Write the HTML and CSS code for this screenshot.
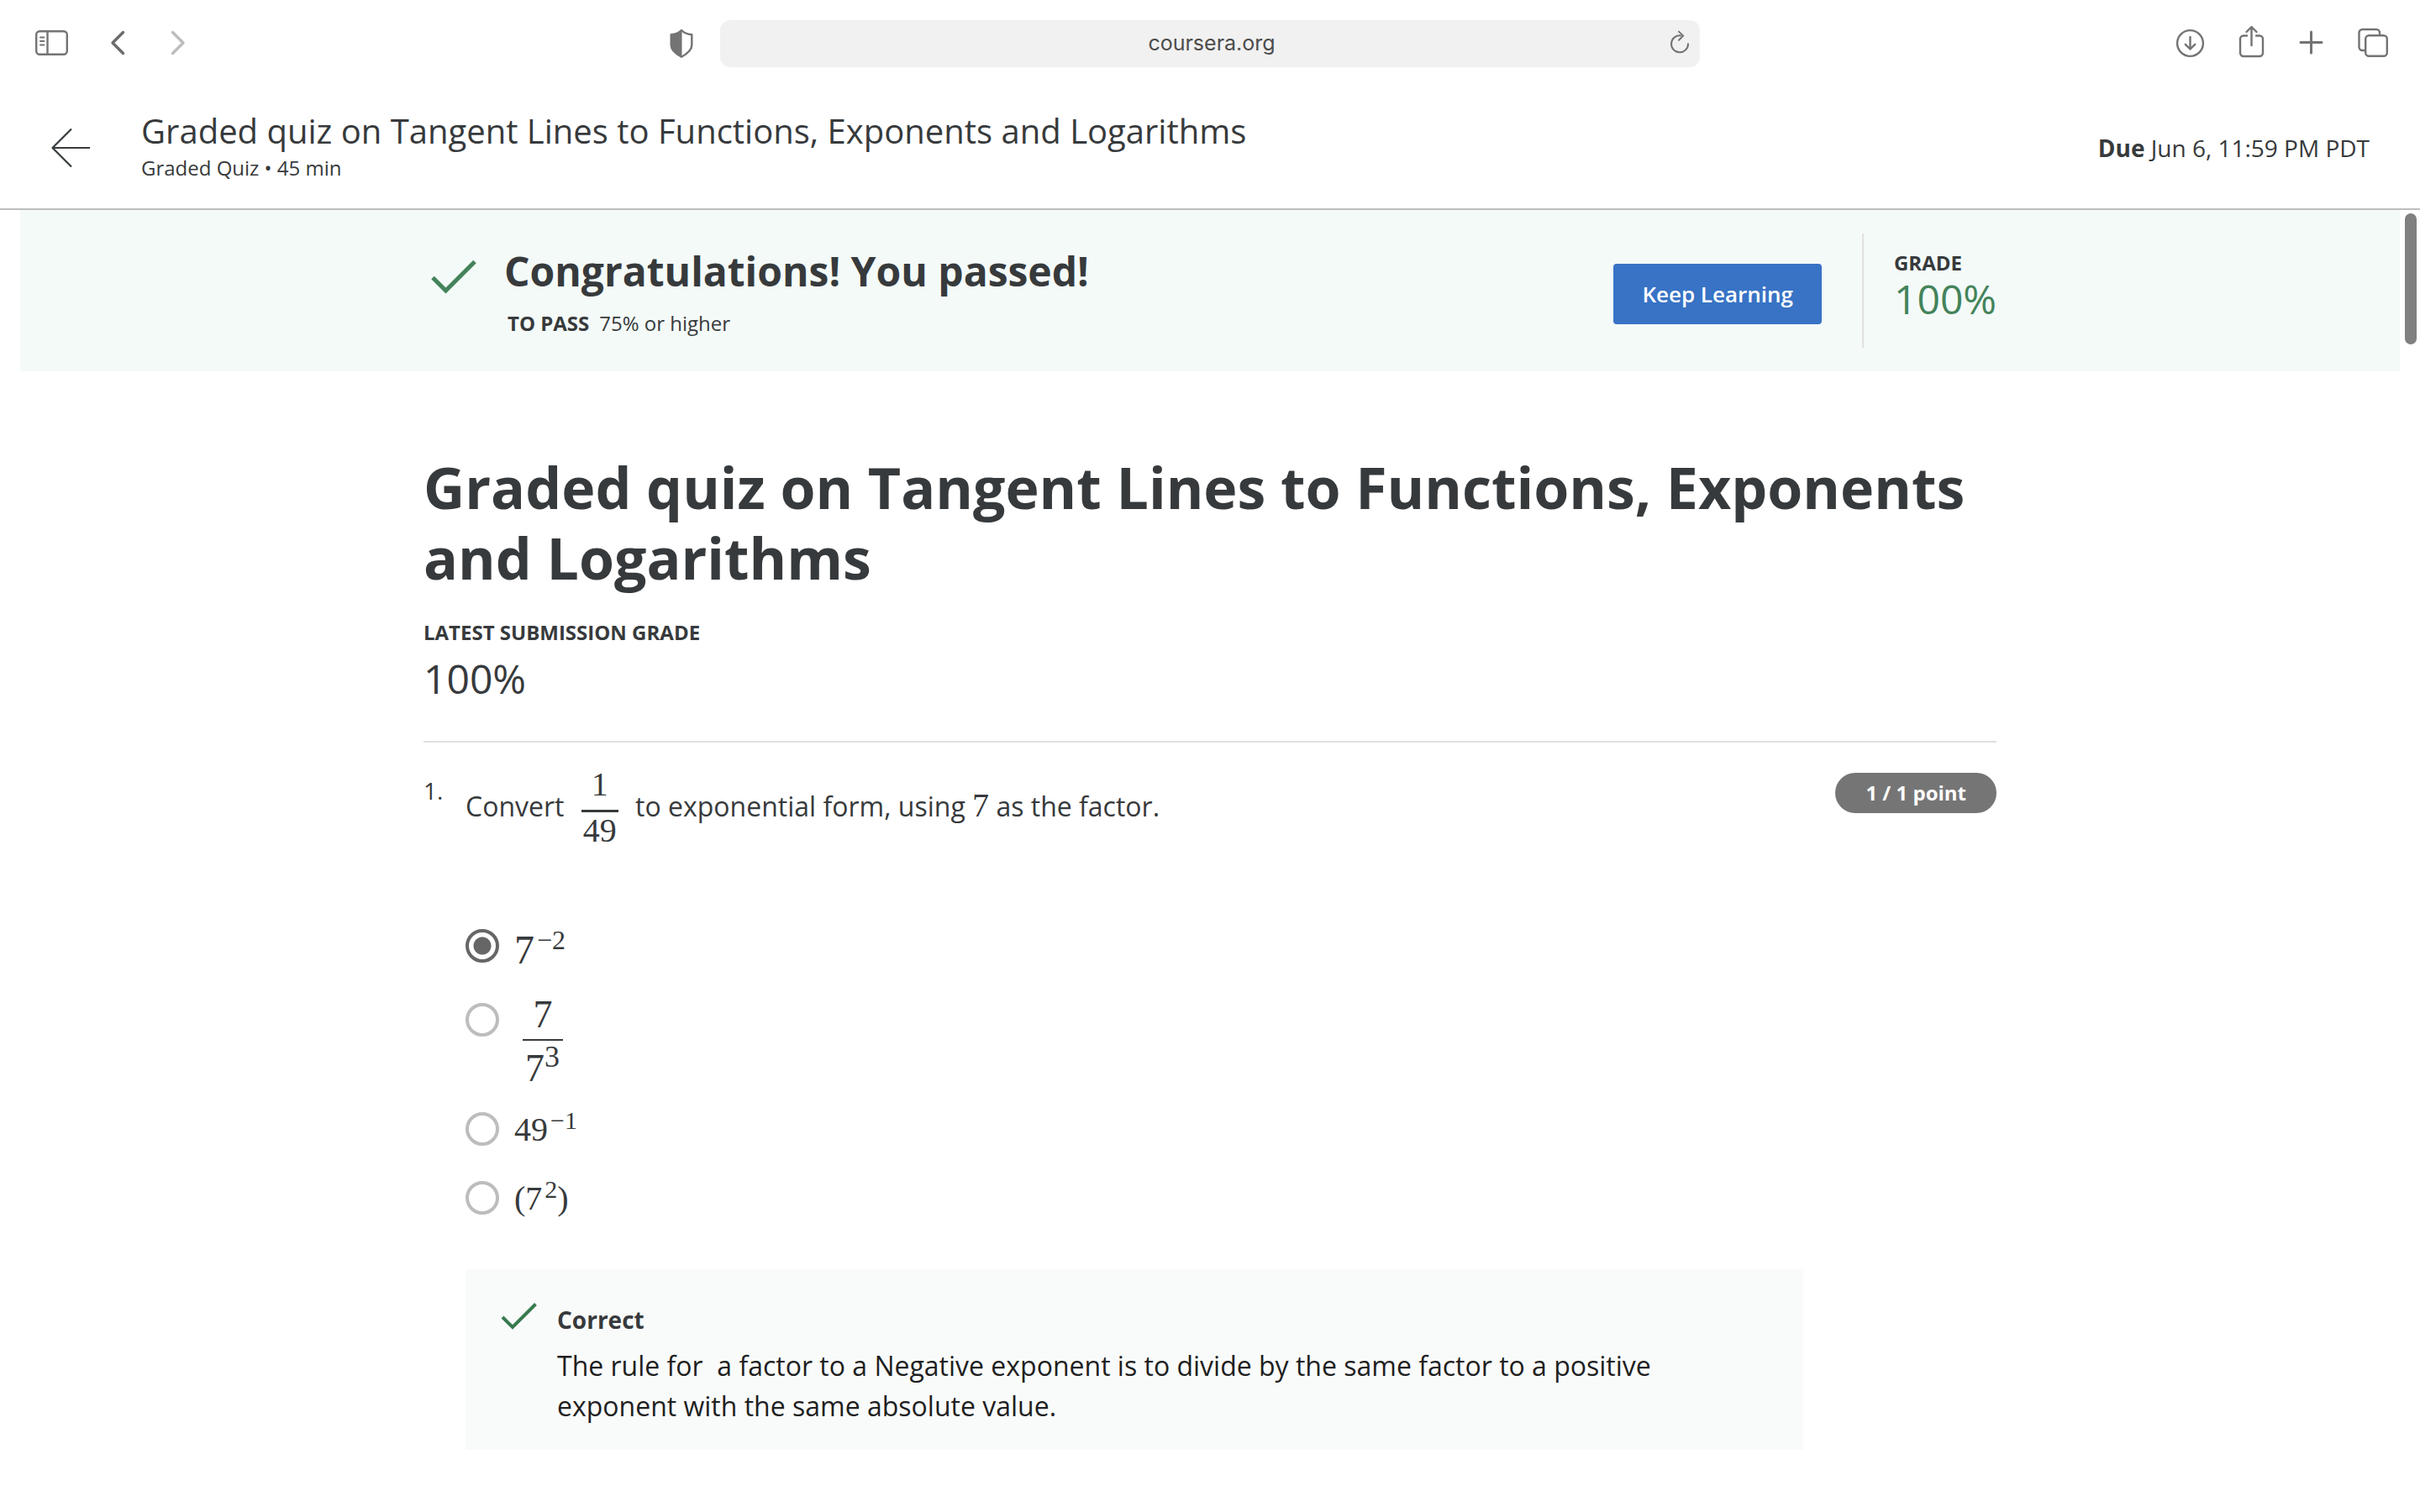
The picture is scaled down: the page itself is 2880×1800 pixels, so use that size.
FILE: index.html
```html
<!DOCTYPE html>
<html lang="en">
<head>
<meta charset="utf-8">
<title>Graded quiz on Tangent Lines to Functions, Exponents and Logarithms</title>
<link rel="stylesheet" href="styles.css">
</head>
<body>
<div class="toolbar">
  <div class="toolbar-left">
    <button class="icon-button" type="button" aria-label="Sidebar">
      <svg width="40" height="36" viewBox="0 0 40 36" fill="none" stroke="#737373" stroke-width="2.4"><rect x="5.2" y="3.2" width="36.6" height="27.6" rx="4"/><path d="M18.500 3v28"/><path d="M10 10.500h4.500M10 15h4.500M10 19.500h4.500" stroke-width="2" stroke-linecap="round"/></svg>
    </button>
    <button class="icon-button" type="button" aria-label="Back">
      <svg width="20" height="36" viewBox="0 0 20 36" fill="none" stroke="#6b6b6b" stroke-width="3.400" stroke-linecap="round" stroke-linejoin="round"><path d="M16.500 4.500 4 17l12.500 12.500"/></svg>
    </button>
    <button class="icon-button" type="button" aria-label="Forward" disabled>
      <svg width="20" height="36" viewBox="0 0 20 36" fill="none" stroke="#bdbdbd" stroke-width="3.400" stroke-linecap="round" stroke-linejoin="round"><path d="M3.500 4.500 16 17 3.500 29.500"/></svg>
    </button>
    <button class="icon-button shield" type="button" aria-label="Privacy report">
      <svg width="28" height="36" viewBox="0 0 28 36"><path d="M14 2C17 5.300 21 6.700 26.300 7.300V19.500c0 5.500-4.500 10-12.300 14.300C6.200 29.500 1.700 25 1.700 19.500V7.300C7 6.700 11 5.300 14 2Z" fill="none" stroke="#737373" stroke-width="2.400" stroke-linejoin="round"/><path d="M14.500 2C11 5.300 7 6.700 1.700 7.300V19.500c0 5.500 4.500 10 12.800 14.300Z" fill="#737373"/></svg>
    </button>
  </div>
  <div class="address">
    <input class="address-input" type="text" value="coursera.org" aria-label="Address">
    <button class="icon-button reload" type="button" aria-label="Reload">
      <svg width="24" height="30" viewBox="0 0 24 30" fill="none" stroke="#737373" stroke-width="2" stroke-linecap="round" stroke-linejoin="round"><path d="M13.500 5.400a10 10 0 1 0 8.500 9.800"/><path d="m11 .6 5.200 5-5.200 5.200"/></svg>
    </button>
  </div>
  <div class="toolbar-right">
    <button class="icon-button" type="button" aria-label="Downloads">
      <svg width="36" height="40" viewBox="0 0 36 40" fill="none" stroke="#737373" stroke-width="2.400" stroke-linecap="round" stroke-linejoin="round"><circle cx="18.500" cy="19.500" r="15.400"/><path d="M18.500 12v14.500M12.800 20.800l5.700 5.700 5.700-5.700"/></svg>
    </button>
    <button class="icon-button" type="button" aria-label="Share">
      <svg width="34" height="40" viewBox="0 0 34 40" fill="none" stroke="#737373" stroke-width="2.400" stroke-linecap="round" stroke-linejoin="round"><path d="M12 10.500H8a4 4 0 0 0-4 4V31a4 4 0 0 0 4 4h19a4 4 0 0 0 4-4V14.500a4 4 0 0 0-4-4h-4"/><path d="M17.500 22V1M11.500 6l6-6 6 6"/></svg>
    </button>
    <button class="icon-button" type="button" aria-label="New tab">
      <svg width="32" height="40" viewBox="0 0 32 40" fill="none" stroke="#737373" stroke-width="3" stroke-linecap="round"><path d="M16.500 6v25M4 18.500h25"/></svg>
    </button>
    <button class="icon-button" type="button" aria-label="Tab overview">
      <svg width="38" height="40" viewBox="0 0 38 40" fill="none" stroke="#737373" stroke-width="2.400"><rect x="11.200" y="10.200" width="25.600" height="24.600" rx="4"/><path d="M11 28H7.500a4 4 0 0 1-4-4V7a4 4 0 0 1 4-4H24a4 4 0 0 1 4 4v3"/></svg>
    </button>
  </div>
</div>

<header class="quiz-header">
  <a class="back-link" href="#" aria-label="Back to course">
    <svg width="48" height="48" viewBox="0 0 48 48" fill="none" stroke="#373a3c" stroke-width="2.200" stroke-linejoin="round"><path d="M25 1.500 2.500 24 25 46.500M2.500 24H47"/></svg>
  </a>
  <div class="quiz-heading">
    <div class="quiz-title">Graded quiz on Tangent Lines to Functions, Exponents and Logarithms</div>
    <div class="small-text">Graded Quiz • 45 min</div>
  </div>
  <div class="due"><strong>Due</strong> Jun 6, 11:59 PM PDT</div>
</header>

<main class="content">
  <div class="scroll-thumb"></div>
  <section class="banner">
    <div class="banner-inner">
      <svg class="banner-check" width="72" height="72" viewBox="0 0 72 72" fill="none" stroke="#43835a" stroke-width="5"><path d="M11 40.500 26.500 56 61 21.500"/></svg>
      <div class="banner-text">
        <h2 class="banner-title">Congratulations! You passed!</h2>
        <p class="pass-line"><strong>TO PASS</strong><span>75% or higher</span></p>
      </div>
      <button class="primary-button" type="button">Keep Learning</button>
      <div class="grade">
        <div class="label-text">GRADE</div>
        <div class="grade-value">100%</div>
      </div>
    </div>
  </section>

  <div class="sheet">
    <h1 class="sheet-title">Graded quiz on Tangent Lines to Functions, Exponents and Logarithms</h1>
    <div class="label-text submission-label">LATEST SUBMISSION GRADE</div>
    <div class="submission-value">100%</div>

    <section class="question">
      <div class="question-number">1.</div>
      <div class="question-body">
        <p class="prompt" id="prompt">Convert <span class="fraction prompt-fraction"><span class="num">1</span><span class="den">49</span></span> to exponential form, using <span class="math">7</span> as the factor.</p>
        <div class="options" role="radiogroup" aria-labelledby="prompt">
          <label class="option"><input class="radio" type="radio" name="q1" checked><span class="math large">7<sup>−2</sup></span></label>
          <label class="option"><input class="radio" type="radio" name="q1"><span class="fraction option-fraction"><span class="num">7</span><span class="den">7<sup>3</sup></span></span></label>
          <label class="option"><input class="radio" type="radio" name="q1"><span class="math">49<sup>−1</sup></span></label>
          <label class="option"><input class="radio" type="radio" name="q1"><span class="math">(7<sup>2</sup>)</span></label>
        </div>
      </div>
      <div class="points">1 / 1 point</div>
    </section>

    <section class="feedback">
      <svg class="feedback-check" width="48" height="40" viewBox="0 0 48 40" fill="none" stroke="#387a50" stroke-width="4"><path d="M3 17 15 29 42.500 1.500"/></svg>
      <div>
        <h3 class="feedback-title">Correct</h3>
        <p class="feedback-text">The rule for&nbsp; a factor to a Negative exponent is to divide by the same factor to a positive exponent with the same absolute value.</p>
      </div>
    </section>
  </div>
</main>
</body>
</html>
```
FILE: styles.css
```css
* {
  box-sizing: border-box;
}

body {
  margin: 0;
  background: #fff;
  color: #373a3c;
  font-family: "Open Sans", "Noto Sans", sans-serif;
  font-size: 32px;
}

h1, h2, h3, p {
  margin: 0;
}

svg {
  display: block;
  overflow: visible;
  flex: none;
}

/* Browser toolbar */
.toolbar {
  display: grid;
  grid-template-columns: 1fr minmax(0, 1166px) 1fr;
  align-items: center;
  height: 104px;
  padding: 0 38px;
}

.toolbar-left {
  display: flex;
  align-items: center;
  gap: 52px;
}

.toolbar-right {
  display: flex;
  align-items: center;
  justify-content: flex-end;
  gap: 38px;
}

.icon-button {
  padding: 0;
  border: 0;
  background: none;
}

.shield {
  margin-left: auto;
  margin-right: 32px;
}

.address {
  display: flex;
  align-items: center;
  height: 56px;
  padding: 0 12px 0 44px;
  border-radius: 12px;
  background: #f1f1f1;
}

.address-input {
  flex: 1;
  min-width: 0;
  border: 0;
  padding: 0 4px 2px 0;
  background: none;
  color: #4c4c4c;
  font: 25px/36px Inter, Roboto, sans-serif;
  text-align: center;
}

/* Quiz header */
.quiz-header {
  display: flex;
  align-items: center;
  gap: 60px;
  height: 146px;
  padding: 0 60px;
  border-bottom: 2px solid #bdbdbd;
}

.quiz-heading {
  flex: 1;
  padding-bottom: 8px;
}

.quiz-title {
  font-size: 40px;
  line-height: 56px;
}

.small-text {
  font-size: 24px;
  line-height: 32px;
}

.due {
  font-size: 28px;
  line-height: 40px;
}

/* Result banner */
.content {
  position: relative;
  padding: 0 24px;
}

.scroll-thumb {
  position: absolute;
  top: 4px;
  right: 4px;
  width: 14px;
  height: 156px;
  border-radius: 7px;
  background: #808080;
}

.banner {
  padding: 28px 0;
  background: #f4faf8;
}

.banner-inner {
  display: flex;
  align-items: center;
  max-width: 1872px;
  margin: 0 auto;
}

.banner-check {
  align-self: flex-start;
  margin-top: 12px;
}

.banner-text {
  flex: 1;
  padding: 2px 0 0 24px;
}

.banner-title {
  font-size: 48px;
  font-weight: 700;
  line-height: 64px;
}

.pass-line {
  display: flex;
  gap: 12px;
  margin-top: 12px;
  padding-left: 4px;
  font-size: 24px;
  line-height: 36px;
}

.primary-button {
  height: 72px;
  margin: 8px 48px 0 0;
  padding: 0 34px;
  border: 0;
  border-radius: 4px;
  background: #3873c5;
  color: #fff;
  font: 600 26px/36px "Open Sans", "Noto Sans", sans-serif;
}

.grade {
  height: 136px;
  padding: 20px 0 0 36px;
  border-left: 2px solid #e0e0e0;
}

.label-text {
  font-size: 24px;
  font-weight: 700;
  line-height: 30px;
}

.grade-value {
  color: #43835a;
  font-size: 48px;
  line-height: 56px;
}

/* Quiz sheet */
.sheet {
  max-width: 1872px;
  margin: 0 auto;
  padding: 96px 0 72px;
}

.sheet-title {
  font-size: 68px;
  font-weight: 700;
  line-height: 84px;
}

.submission-label {
  margin-top: 32px;
}

.submission-value {
  margin-top: 6px;
  padding-bottom: 40px;
  border-bottom: 2px solid #e0e0e0;
  font-size: 48px;
  line-height: 68px;
}

.question {
  display: grid;
  grid-template-columns: 50px 1fr auto;
  align-items: start;
  padding-top: 28px;
}

.question-number {
  margin-top: 8px;
  font-size: 28px;
  line-height: 42px;
}

.points {
  margin-top: 8px;
  padding: 0 36px;
  border-radius: 24px;
  background: #757575;
  color: #fff;
  font-size: 24px;
  font-weight: 700;
  line-height: 48px;
}

.math,
.fraction {
  font-family: "Liberation Serif", serif;
  font-size: 40px;
  line-height: 42px;
}

.prompt .math {
  line-height: 40px;
}

sup {
  margin-left: 3px;
  font-size: 30px;
  line-height: 0;
  vertical-align: 14px;
}

.large {
  font-size: 48px;
  line-height: 50px;
}

.large sup {
  font-size: 32px;
  vertical-align: 17px;
}

.fraction {
  display: inline-flex;
  flex-direction: column;
  vertical-align: middle;
  text-align: center;
}

.prompt-fraction {
  margin: 0 12px;
  line-height: 44px;
}

.prompt-fraction .num {
  padding-bottom: 8px;
  border-bottom: 3px solid #373a3c;
}

.prompt-fraction .den {
  padding: 0 2px 4px;
}

.options {
  display: flex;
  flex-direction: column;
  gap: 28px;
  margin-top: 91px;
}

.option {
  display: flex;
  align-items: flex-start;
  gap: 18px;
  min-height: 54px;
}

.option .large {
  padding-bottom: 10px;
}

.option-fraction {
  margin-left: 10px;
  font-size: 46px;
}

.option-fraction .num {
  padding-bottom: 15px;
  border-bottom: 2px solid #373a3c;
  line-height: 28px;
}

.option-fraction .den {
  padding: 8px 4px 0 3px;
  line-height: 49px;
}

.option-fraction sup {
  margin-left: 0;
  font-size: 36px;
  vertical-align: 17px;
}

.radio {
  appearance: none;
  flex: none;
  width: 40px;
  height: 40px;
  margin: 0;
  border: 4px solid #bdbdbd;
  border-radius: 50%;
  background: #fff;
}

.radio:checked {
  border-color: #666;
  background: radial-gradient(circle, #666 10px, #fff 11px);
}

/* Answer feedback */
.feedback {
  display: flex;
  gap: 20px;
  max-width: 1592px;
  margin: 51px 0 0 50px;
  padding: 40px 60px 28px 41px;
  background: #f9fbfa;
}

.feedback-title {
  font-size: 28px;
  font-weight: 700;
  line-height: 40px;
}

.feedback-text {
  margin-top: 11px;
  color: #1f1f1f;
  font-size: 32px;
  line-height: 48px;
}
```
